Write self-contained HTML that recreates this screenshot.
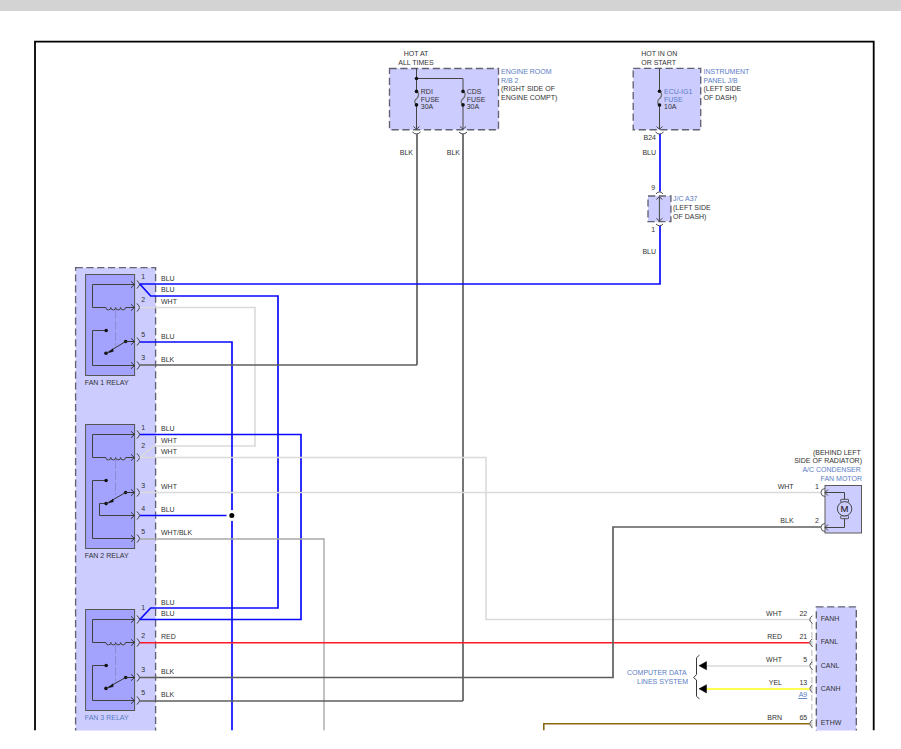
<!DOCTYPE html>
<html><head><meta charset="utf-8"><style>
html,body{margin:0;padding:0;background:#fff;width:901px;height:749px;overflow:hidden}
svg{display:block}
text{font-family:"Liberation Sans",sans-serif}
</style></head><body>
<svg width="901" height="749" viewBox="0 0 901 749">
<defs><clipPath id="c"><rect x="0" y="0" width="901" height="730.5"/></clipPath></defs>
<g clip-path="url(#c)">
<rect x="0" y="0" width="901" height="11" fill="#d3d3d3"/>
<path d="M35,730.5 V41.7 H873.7 V730.5" fill="none" stroke="#000" stroke-width="1.8"/>
<text x="416" y="56.0" fill="#333" font-size="7" text-anchor="middle">HOT AT</text>
<text x="416" y="64.9" fill="#333" font-size="7" text-anchor="middle">ALL TIMES</text>
<rect x="389.5" y="68.5" width="109.0" height="61.19999999999999" fill="#ccccff" stroke="#626270" stroke-width="1.35" stroke-dasharray="7.2 3.6"/>
<polyline points="416.5,68.5 416.5,91.4" fill="none" stroke="#444" stroke-width="1" />
<polyline points="416.5,104.9 416.5,129.2" fill="none" stroke="#444" stroke-width="1" />
<path d="M413.5,126.5 L416.5,129.2 L419.5,126.5" fill="none" stroke="#444" stroke-width="1" />
<path d="M412.5,132.0 Q416.5,136 420.5,132.0" fill="none" stroke="#444" stroke-width="1" />
<path d="M416.5,91.4 C419.5,93.0 419.0,96.0 417.0,98.15 C414.5,100.0 413.5,102.9 416.5,104.9" fill="none" stroke="#707070" stroke-width="1.3" />
<circle cx="416.5" cy="91.4" r="1.8" fill="#111"/>
<circle cx="416.5" cy="104.9" r="1.8" fill="#111"/>
<polyline points="463,78.5 463,91.4" fill="none" stroke="#444" stroke-width="1" />
<polyline points="463,104.9 463,129.2" fill="none" stroke="#444" stroke-width="1" />
<path d="M460,126.5 L463,129.2 L466,126.5" fill="none" stroke="#444" stroke-width="1" />
<path d="M459,132.0 Q463,136 467,132.0" fill="none" stroke="#444" stroke-width="1" />
<path d="M463,91.4 C466,93.0 465.5,96.0 463.5,98.15 C461,100.0 460,102.9 463,104.9" fill="none" stroke="#707070" stroke-width="1.3" />
<circle cx="463" cy="91.4" r="1.8" fill="#111"/>
<circle cx="463" cy="104.9" r="1.8" fill="#111"/>
<polyline points="417,133.8 417,365" fill="none" stroke="#5e5e5e" stroke-width="1.7" />
<polyline points="463,133.8 463,701" fill="none" stroke="#5e5e5e" stroke-width="1.7" />
<polyline points="416.5,78.5 463,78.5" fill="none" stroke="#444" stroke-width="1" />
<circle cx="416.5" cy="78.5" r="1.8" fill="#111"/>
<text x="420.8" y="93.8" fill="#333" font-size="7" text-anchor="start">RDI</text>
<text x="420.8" y="101.9" fill="#333" font-size="7" text-anchor="start">FUSE</text>
<text x="420.8" y="108.8" fill="#333" font-size="7" text-anchor="start">30A</text>
<text x="466.7" y="93.8" fill="#333" font-size="7" text-anchor="start">CDS</text>
<text x="466.7" y="101.9" fill="#333" font-size="7" text-anchor="start">FUSE</text>
<text x="466.7" y="108.8" fill="#333" font-size="7" text-anchor="start">30A</text>
<text x="501" y="74.0" fill="#5a7cc4" font-size="7" text-anchor="start">ENGINE ROOM</text>
<text x="501" y="82.7" fill="#5a7cc4" font-size="7" text-anchor="start">R/B 2</text>
<text x="501" y="91.4" fill="#333" font-size="7" text-anchor="start">(RIGHT SIDE OF</text>
<text x="501" y="100.1" fill="#333" font-size="7" text-anchor="start">ENGINE COMPT)</text>
<text x="413" y="155.2" fill="#333" font-size="7" text-anchor="end">BLK</text>
<text x="460" y="155.2" fill="#333" font-size="7" text-anchor="end">BLK</text>
<text x="641.2" y="56.2" fill="#333" font-size="7" text-anchor="start">HOT IN ON</text>
<text x="641.2" y="64.9" fill="#333" font-size="7" text-anchor="start">OR START</text>
<rect x="633.2" y="68.4" width="67.5" height="61.29999999999998" fill="#ccccff" stroke="#626270" stroke-width="1.35" stroke-dasharray="7.2 3.6"/>
<polyline points="659.5,68.4 659.5,91.3" fill="none" stroke="#444" stroke-width="1" />
<polyline points="659.5,105.1 659.5,129.2" fill="none" stroke="#444" stroke-width="1" />
<path d="M656.5,126.5 L659.5,129.2 L662.5,126.5" fill="none" stroke="#444" stroke-width="1" />
<path d="M655.5,132.0 Q659.5,136 663.5,132.0" fill="none" stroke="#444" stroke-width="1" />
<path d="M659.5,91.3 C662.5,92.89999999999999 662.0,95.89999999999999 660.0,98.19999999999999 C657.5,99.89999999999999 656.5,103.1 659.5,105.1" fill="none" stroke="#707070" stroke-width="1.3" />
<circle cx="659.5" cy="91.3" r="1.8" fill="#111"/>
<circle cx="659.5" cy="105.1" r="1.8" fill="#111"/>
<text x="664" y="94.4" fill="#5a7cc4" font-size="7" text-anchor="start">ECU-IG1</text>
<text x="664" y="102.2" fill="#5a7cc4" font-size="7" text-anchor="start">FUSE</text>
<text x="664" y="109.4" fill="#333" font-size="7" text-anchor="start">10A</text>
<text x="703.5" y="74.0" fill="#5a7cc4" font-size="7" text-anchor="start">INSTRUMENT</text>
<text x="703.5" y="82.7" fill="#5a7cc4" font-size="7" text-anchor="start">PANEL J/B</text>
<text x="703.5" y="91.4" fill="#333" font-size="7" text-anchor="start">(LEFT SIDE</text>
<text x="703.5" y="100.1" fill="#333" font-size="7" text-anchor="start">OF DASH)</text>
<text x="656" y="140.2" fill="#333" font-size="7" text-anchor="end">B24</text>
<text x="656" y="154.5" fill="#333" font-size="7" text-anchor="end">BLU</text>
<polyline points="660,134 660,191.5" fill="none" stroke="#0a0aff" stroke-width="1.7" />
<rect x="648" y="196" width="22.899999999999977" height="25.599999999999994" fill="#ccccff" stroke="#626270" stroke-width="1.35" stroke-dasharray="7.2 3.6"/>
<path d="M656.0,193.8 Q659.5,190 663.0,193.8" fill="none" stroke="#444" stroke-width="1" />
<path d="M656.0,224 Q659.5,227.5 663.0,224" fill="none" stroke="#444" stroke-width="1" />
<polyline points="659.4,197 659.4,221" fill="none" stroke="#444" stroke-width="1" />
<path d="M656.4,199.5 L659.4,196.8 L662.4,199.5" fill="none" stroke="#444" stroke-width="1" />
<path d="M656.4,218.3 L659.4,221 L662.4,218.3" fill="none" stroke="#444" stroke-width="1" />
<text x="653.3" y="190.0" fill="#333" font-size="7" text-anchor="middle">9</text>
<text x="653.3" y="232.2" fill="#333" font-size="7" text-anchor="middle">1</text>
<text x="673" y="201.1" fill="#5a7cc4" font-size="7" text-anchor="start">J/C A37</text>
<text x="673" y="210.0" fill="#333" font-size="7" text-anchor="start">(LEFT SIDE</text>
<text x="673" y="219.1" fill="#333" font-size="7" text-anchor="start">OF DASH)</text>
<text x="656" y="254.0" fill="#333" font-size="7" text-anchor="end">BLU</text>
<rect x="75.6" y="267.6" width="80.0" height="472.4" fill="#ccccff" stroke="#626270" stroke-width="1.35" stroke-dasharray="7.2 3.6"/>
<rect x="85.6" y="274.5" width="49" height="101.0" fill="#a3a3fe" stroke="#555" stroke-width="1"/>
<polyline points="134.4,284.5 92.5,284.5 92.5,307.5 105.9,307.5" fill="none" stroke="#404040" stroke-width="1" />
<path d="M105.9,307.5 a2.45,2.45 0 0 0 4.9,0 a2.45,2.45 0 0 0 4.9,0 a2.45,2.45 0 0 0 4.9,0 a2.45,2.45 0 0 0 4.9,0" fill="none" stroke="#444" stroke-width="1" />
<polyline points="125.5,307.5 134.4,307.5" fill="none" stroke="#404040" stroke-width="1" />
<polyline points="115.5,310.0 115.5,346.4" fill="none" stroke="#8c8cd6" stroke-width="1" stroke-dasharray="9 2"/>
<polyline points="106.2,330.5 92.5,330.5 92.5,365.5 134.4,365.5" fill="none" stroke="#404040" stroke-width="1" />
<circle cx="106.2" cy="330.5" r="1.8" fill="#111"/>
<circle cx="106" cy="353.3" r="1.8" fill="#111"/>
<circle cx="125.7" cy="341.5" r="1.8" fill="#111"/>
<polyline points="106,353.3 125.7,341.5 134.4,341.5" fill="none" stroke="#333" stroke-width="1" />
<path d="M108.2,352.8 L112.9,348.7 L113.3,351.5 Z" fill="#111" stroke="#111" stroke-width="0.4" />
<path d="M131,281.3 L134.4,284.5 L131,287.7" fill="none" stroke="#333" stroke-width="1" />
<path d="M137,280.5 Q139.3,283.0 139.6,284.5 Q139.3,286.0 137,288.5" fill="none" stroke="#3a3a3a" stroke-width="1" />
<path d="M131,304.3 L134.4,307.5 L131,310.7" fill="none" stroke="#333" stroke-width="1" />
<path d="M137,303.5 Q139.3,306.0 139.6,307.5 Q139.3,309.0 137,311.5" fill="none" stroke="#3a3a3a" stroke-width="1" />
<path d="M131,338.3 L134.4,341.5 L131,344.7" fill="none" stroke="#333" stroke-width="1" />
<path d="M137,337.5 Q139.3,340.0 139.6,341.5 Q139.3,343.0 137,345.5" fill="none" stroke="#3a3a3a" stroke-width="1" />
<path d="M131,362.3 L134.4,365.5 L131,368.7" fill="none" stroke="#333" stroke-width="1" />
<path d="M137,361.5 Q139.3,364.0 139.6,365.5 Q139.3,367.0 137,369.5" fill="none" stroke="#3a3a3a" stroke-width="1" />
<text x="143.2" y="279.2" fill="#333" font-size="7" text-anchor="middle">1</text>
<text x="143.2" y="302.2" fill="#333" font-size="7" text-anchor="middle">2</text>
<text x="143.2" y="336.5" fill="#333" font-size="7" text-anchor="middle">5</text>
<text x="143.2" y="359.9" fill="#333" font-size="7" text-anchor="middle">3</text>
<text x="84.8" y="385.2" fill="#333" font-size="7" text-anchor="start">FAN 1 RELAY</text>
<rect x="85.6" y="424.5" width="49" height="124.0" fill="#a3a3fe" stroke="#555" stroke-width="1"/>
<polyline points="134.4,434.5 92.5,434.5 92.5,457.5 105.9,457.5" fill="none" stroke="#404040" stroke-width="1" />
<path d="M105.9,457.5 a2.45,2.45 0 0 0 4.9,0 a2.45,2.45 0 0 0 4.9,0 a2.45,2.45 0 0 0 4.9,0 a2.45,2.45 0 0 0 4.9,0" fill="none" stroke="#444" stroke-width="1" />
<polyline points="125.5,457.5 134.4,457.5" fill="none" stroke="#404040" stroke-width="1" />
<polyline points="115.5,460.0 115.5,495" fill="none" stroke="#8c8cd6" stroke-width="1" stroke-dasharray="9 2"/>
<polyline points="106.1,480.5 92.5,480.5 92.5,538.5 134.4,538.5" fill="none" stroke="#404040" stroke-width="1" />
<polyline points="106.1,503.5 99.5,503.5 99.5,515.5 134.4,515.5" fill="none" stroke="#404040" stroke-width="1" />
<circle cx="106.1" cy="480.5" r="1.8" fill="#111"/>
<circle cx="106.1" cy="503.6" r="1.8" fill="#111"/>
<circle cx="125.6" cy="492.5" r="1.8" fill="#111"/>
<polyline points="106.1,503.6 125.6,492.5 134.4,492.5" fill="none" stroke="#333" stroke-width="1" />
<path d="M108.3,503.1 L113.0,499.0 L113.39999999999999,501.8 Z" fill="#111" stroke="#111" stroke-width="0.4" />
<path d="M131,431.3 L134.4,434.5 L131,437.7" fill="none" stroke="#333" stroke-width="1" />
<path d="M137,430.5 Q139.3,433.0 139.6,434.5 Q139.3,436.0 137,438.5" fill="none" stroke="#3a3a3a" stroke-width="1" />
<path d="M131,454.3 L134.4,457.5 L131,460.7" fill="none" stroke="#333" stroke-width="1" />
<path d="M137,453.5 Q139.3,456.0 139.6,457.5 Q139.3,459.0 137,461.5" fill="none" stroke="#3a3a3a" stroke-width="1" />
<path d="M131,489.3 L134.4,492.5 L131,495.7" fill="none" stroke="#333" stroke-width="1" />
<path d="M137,488.5 Q139.3,491.0 139.6,492.5 Q139.3,494.0 137,496.5" fill="none" stroke="#3a3a3a" stroke-width="1" />
<path d="M131,512.3 L134.4,515.5 L131,518.7" fill="none" stroke="#333" stroke-width="1" />
<path d="M137,511.5 Q139.3,514.0 139.6,515.5 Q139.3,517.0 137,519.5" fill="none" stroke="#3a3a3a" stroke-width="1" />
<path d="M131,535.3 L134.4,538.5 L131,541.7" fill="none" stroke="#333" stroke-width="1" />
<path d="M137,534.5 Q139.3,537.0 139.6,538.5 Q139.3,540.0 137,542.5" fill="none" stroke="#3a3a3a" stroke-width="1" />
<text x="143.2" y="430.3" fill="#333" font-size="7" text-anchor="middle">1</text>
<text x="143.2" y="448.0" fill="#333" font-size="7" text-anchor="middle">2</text>
<text x="143.2" y="488.3" fill="#333" font-size="7" text-anchor="middle">3</text>
<text x="143.2" y="511.3" fill="#333" font-size="7" text-anchor="middle">4</text>
<text x="143.2" y="534.0" fill="#333" font-size="7" text-anchor="middle">5</text>
<text x="84.8" y="557.7" fill="#333" font-size="7" text-anchor="start">FAN 2 RELAY</text>
<rect x="85.6" y="609.5" width="49" height="101.0" fill="#a3a3fe" stroke="#555" stroke-width="1"/>
<polyline points="134.4,619.5 92.5,619.5 92.5,642.5 105.9,642.5" fill="none" stroke="#404040" stroke-width="1" />
<path d="M105.9,642.5 a2.45,2.45 0 0 0 4.9,0 a2.45,2.45 0 0 0 4.9,0 a2.45,2.45 0 0 0 4.9,0 a2.45,2.45 0 0 0 4.9,0" fill="none" stroke="#444" stroke-width="1" />
<polyline points="125.5,642.5 134.4,642.5" fill="none" stroke="#404040" stroke-width="1" />
<polyline points="115.5,645.0 115.5,681.5" fill="none" stroke="#8c8cd6" stroke-width="1" stroke-dasharray="9 2"/>
<polyline points="106.2,665.5 92.5,665.5 92.5,700.5 134.4,700.5" fill="none" stroke="#404040" stroke-width="1" />
<circle cx="106.2" cy="665.5" r="1.8" fill="#111"/>
<circle cx="106" cy="688.4" r="1.8" fill="#111"/>
<circle cx="125.7" cy="677.5" r="1.8" fill="#111"/>
<polyline points="106,688.4 125.7,677.5 134.4,677.5" fill="none" stroke="#333" stroke-width="1" />
<path d="M108.2,687.9 L112.9,683.8 L113.3,686.6 Z" fill="#111" stroke="#111" stroke-width="0.4" />
<path d="M131,616.3 L134.4,619.5 L131,622.7" fill="none" stroke="#333" stroke-width="1" />
<path d="M137,615.5 Q139.3,618.0 139.6,619.5 Q139.3,621.0 137,623.5" fill="none" stroke="#3a3a3a" stroke-width="1" />
<path d="M131,639.3 L134.4,642.5 L131,645.7" fill="none" stroke="#333" stroke-width="1" />
<path d="M137,638.5 Q139.3,641.0 139.6,642.5 Q139.3,644.0 137,646.5" fill="none" stroke="#3a3a3a" stroke-width="1" />
<path d="M131,674.3 L134.4,677.5 L131,680.7" fill="none" stroke="#333" stroke-width="1" />
<path d="M137,673.5 Q139.3,676.0 139.6,677.5 Q139.3,679.0 137,681.5" fill="none" stroke="#3a3a3a" stroke-width="1" />
<path d="M131,697.3 L134.4,700.5 L131,703.7" fill="none" stroke="#333" stroke-width="1" />
<path d="M137,696.5 Q139.3,699.0 139.6,700.5 Q139.3,702.0 137,704.5" fill="none" stroke="#3a3a3a" stroke-width="1" />
<text x="143.2" y="610.0" fill="#333" font-size="7" text-anchor="middle">1</text>
<text x="143.2" y="637.7" fill="#333" font-size="7" text-anchor="middle">2</text>
<text x="143.2" y="672.0" fill="#333" font-size="7" text-anchor="middle">3</text>
<text x="143.2" y="695.3" fill="#333" font-size="7" text-anchor="middle">5</text>
<text x="84.8" y="719.9" fill="#5a7cc4" font-size="7" text-anchor="start">FAN 3 RELAY</text>
<polyline points="139.8,284 660,284 660,226" fill="none" stroke="#0a0aff" stroke-width="1.7" />
<polyline points="139.8,284 150.7,296 278,296 278,608 150.7,608 139.8,619.5" fill="none" stroke="#0a0aff" stroke-width="1.7" />
<polyline points="139.8,307.5 255,307.5 255,446 154,446 139.8,457.5" fill="none" stroke="#dadada" stroke-width="1.6" />
<polyline points="139.8,342 232,342 232,730.5" fill="none" stroke="#0a0aff" stroke-width="1.7" />
<polyline points="139.8,365 417,365" fill="none" stroke="#5e5e5e" stroke-width="1.7" />
<polyline points="139.8,434.5 301,434.5 301,619.5 139.8,619.5" fill="none" stroke="#0a0aff" stroke-width="1.7" />
<polyline points="139.8,457.5 486,457.5 486,619.5 809.6,619.5" fill="none" stroke="#dadada" stroke-width="1.6" />
<polyline points="139.8,492.5 821,492.5" fill="none" stroke="#dadada" stroke-width="1.6" />
<polyline points="139.8,515.5 232,515.5" fill="none" stroke="#0a0aff" stroke-width="1.7" />
<circle cx="232" cy="515.5" r="5.5" fill="#fff"/>
<circle cx="231.8" cy="515.6" r="2.5" fill="#000"/>
<polyline points="139.8,539 324,539 324,730.5" fill="none" stroke="#a8a8a8" stroke-width="1.4" />
<polyline points="139.8,642.8 809.6,642.8" fill="none" stroke="#ff1828" stroke-width="1.6" />
<polyline points="139.8,677.5 613,677.5 613,527 821,527" fill="none" stroke="#5e5e5e" stroke-width="1.7" />
<polyline points="139.8,701 463,701" fill="none" stroke="#5e5e5e" stroke-width="1.7" />
<text x="161" y="281.0" fill="#333" font-size="7" text-anchor="start">BLU</text>
<text x="161" y="291.8" fill="#333" font-size="7" text-anchor="start">BLU</text>
<text x="161" y="304.0" fill="#333" font-size="7" text-anchor="start">WHT</text>
<text x="161" y="338.7" fill="#333" font-size="7" text-anchor="start">BLU</text>
<text x="161" y="361.7" fill="#333" font-size="7" text-anchor="start">BLK</text>
<text x="161" y="431.0" fill="#333" font-size="7" text-anchor="start">BLU</text>
<text x="161" y="443.0" fill="#333" font-size="7" text-anchor="start">WHT</text>
<text x="161" y="454.0" fill="#333" font-size="7" text-anchor="start">WHT</text>
<text x="161" y="488.7" fill="#333" font-size="7" text-anchor="start">WHT</text>
<text x="161" y="511.7" fill="#333" font-size="7" text-anchor="start">BLU</text>
<text x="161" y="534.9" fill="#333" font-size="7" text-anchor="start">WHT/BLK</text>
<text x="161" y="604.8" fill="#333" font-size="7" text-anchor="start">BLU</text>
<text x="161" y="615.9" fill="#333" font-size="7" text-anchor="start">BLU</text>
<text x="161" y="638.8" fill="#333" font-size="7" text-anchor="start">RED</text>
<text x="161" y="673.8" fill="#333" font-size="7" text-anchor="start">BLK</text>
<text x="161" y="697.0" fill="#333" font-size="7" text-anchor="start">BLK</text>
<text x="860.8" y="454.9" fill="#333" font-size="7" text-anchor="end">(BEHIND LEFT</text>
<text x="862" y="463.2" fill="#333" font-size="7" text-anchor="end">SIDE OF RADIATOR)</text>
<text x="860.8" y="472.0" fill="#5a7cc4" font-size="7" text-anchor="end">A/C CONDENSER</text>
<text x="862" y="481.0" fill="#5a7cc4" font-size="7" text-anchor="end">FAN MOTOR</text>
<rect x="825" y="485.5" width="36.5" height="47.5" fill="#ccccff" stroke="#5a5a5a" stroke-width="1"/>
<path d="M825,488.5 A4,4 0 0 0 825,496.5" fill="none" stroke="#555" stroke-width="1" />
<path d="M828,489.5 L825,492.5 L828,495.5" fill="none" stroke="#444" stroke-width="1" />
<path d="M825,523.5 A4,4 0 0 0 825,531.5" fill="none" stroke="#555" stroke-width="1" />
<path d="M828,524.5 L825,527.5 L828,530.5" fill="none" stroke="#444" stroke-width="1" />
<polyline points="825,492.5 844.5,492.5 844.5,499.5" fill="none" stroke="#444" stroke-width="1" />
<polyline points="844.5,518.5 844.5,527.5 825,527.5" fill="none" stroke="#444" stroke-width="1" />
<rect x="840.7" y="499.3" width="7.8" height="3" rx="0.6" fill="#ccccff" stroke="#444" stroke-width="0.9"/>
<rect x="840.7" y="515.7" width="7.8" height="3" rx="0.6" fill="#ccccff" stroke="#444" stroke-width="0.9"/>
<circle cx="844.6" cy="508.8" r="7.2" fill="#ccccff" stroke="#444" stroke-width="1"/>
<text x="844.6" y="512.2" fill="#1e1e1e" font-size="9.6" stroke="#1e1e1e" stroke-width="0.1" text-anchor="middle">M</text>
<text x="817" y="488.8" fill="#333" font-size="7" text-anchor="middle">1</text>
<text x="817" y="523.0" fill="#333" font-size="7" text-anchor="middle">2</text>
<text x="793.6" y="488.8" fill="#333" font-size="7" text-anchor="end">WHT</text>
<text x="793.6" y="523.0" fill="#333" font-size="7" text-anchor="end">BLK</text>
<rect x="816.3" y="606.8" width="40.0" height="133.20000000000005" fill="#ccccff" stroke="#626270" stroke-width="1.35" stroke-dasharray="7.2 3.6"/>
<polyline points="811.8,623 811.8,730.5" fill="none" stroke="#d0d0d0" stroke-width="1.5" stroke-dasharray="6 3"/>
<path d="M812.4,615.7 Q807.2,619.6 812.4,623.5" fill="none" stroke="#444" stroke-width="1" />
<path d="M812.4,638.8000000000001 Q807.2,642.7 812.4,646.6" fill="none" stroke="#444" stroke-width="1" />
<path d="M812.4,661.8000000000001 Q807.2,665.7 812.4,669.6" fill="none" stroke="#444" stroke-width="1" />
<path d="M812.4,684.9 Q807.2,688.8 812.4,692.6999999999999" fill="none" stroke="#444" stroke-width="1" />
<path d="M812.4,719.9 Q807.2,723.8 812.4,727.6999999999999" fill="none" stroke="#444" stroke-width="1" />
<text x="782" y="615.9" fill="#333" font-size="7" text-anchor="end">WHT</text>
<text x="807.2" y="615.9" fill="#333" font-size="7" text-anchor="end">22</text>
<text x="820.7" y="620.8" fill="#333" font-size="7" text-anchor="start">FANH</text>
<text x="782" y="638.8" fill="#333" font-size="7" text-anchor="end">RED</text>
<text x="807.2" y="638.8" fill="#333" font-size="7" text-anchor="end">21</text>
<text x="820.7" y="644.1" fill="#333" font-size="7" text-anchor="start">FANL</text>
<text x="782" y="662.0" fill="#333" font-size="7" text-anchor="end">WHT</text>
<text x="807.2" y="662.0" fill="#333" font-size="7" text-anchor="end">5</text>
<text x="820.7" y="667.9" fill="#333" font-size="7" text-anchor="start">CANL</text>
<text x="782" y="685.3" fill="#333" font-size="7" text-anchor="end">YEL</text>
<text x="807.2" y="685.3" fill="#333" font-size="7" text-anchor="end">13</text>
<text x="820.7" y="691.0" fill="#333" font-size="7" text-anchor="start">CANH</text>
<text x="782" y="720.1" fill="#333" font-size="7" text-anchor="end">BRN</text>
<text x="807.2" y="720.1" fill="#333" font-size="7" text-anchor="end">65</text>
<text x="820.7" y="725.3" fill="#333" font-size="7" text-anchor="start">ETHW</text>
<text x="807.2" y="697.0" fill="#5a7cc4" font-size="7" text-anchor="end">A9</text>
<polyline points="798.2,698.5 807.2,698.5" fill="none" stroke="#5a7cc4" stroke-width="0.9" />
<polyline points="706,666 809.6,666" fill="none" stroke="#dadada" stroke-width="1.6" />
<polyline points="706,689 809.6,689" fill="none" stroke="#ffff14" stroke-width="1.7" />
<path d="M699,665.7 L706.5,661.6 L706.5,669.8 Z" fill="#000" stroke="#000" stroke-width="0.5" />
<path d="M699,688.8 L706.5,684.7 L706.5,692.9 Z" fill="#000" stroke="#000" stroke-width="0.5" />
<polyline points="699.5,655 696.5,657.8 696.5,674.6 693.6,677.6 696.5,680 696.5,696.3 699.5,699" fill="none" stroke="#383838" stroke-width="1" />
<text x="686.7" y="675.0" fill="#5a7cc4" font-size="7" text-anchor="end">COMPUTER DATA</text>
<text x="688" y="684.0" fill="#5a7cc4" font-size="7" text-anchor="end">LINES SYSTEM</text>
<polyline points="543.8,730.5 543.8,723.8 809.6,723.8" fill="none" stroke="#8a6812" stroke-width="1.6" />
</g>
</svg>
</body></html>
